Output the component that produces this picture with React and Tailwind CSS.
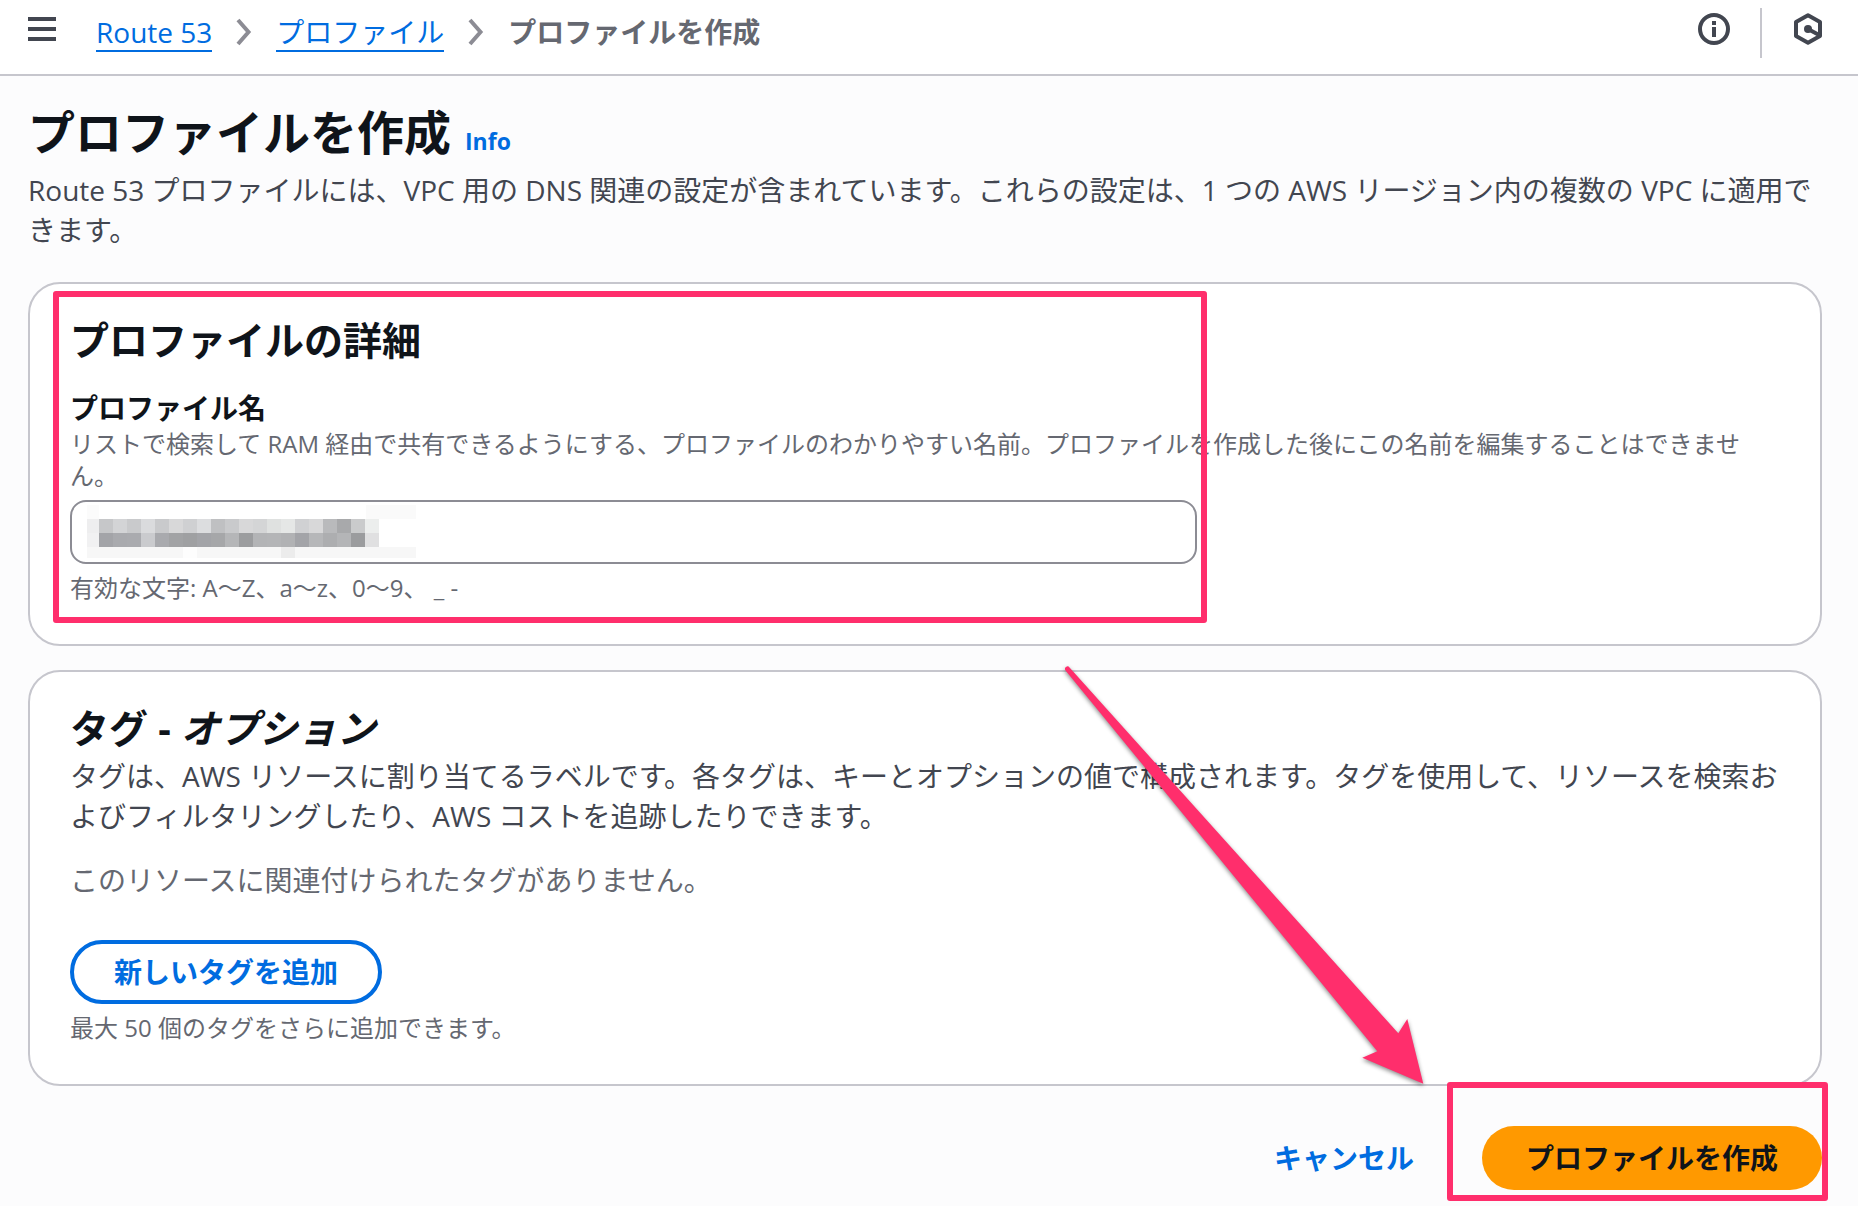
const ROW_TOP = ["#c6c7c9","#d3d4d6","#c9cacc","#dadbdd","#c9cacc","#d8d8d9","#cfd0d2","#dcdddf","#bfc0c2","#c9cacc","#d8d8d9","#d4d5d6","#dfe1e0","#e5e7e6","#d0d1d3","#d8d8d9","#b9babc","#a8a9ab","#cacbcc","#eceeed"];
const ROW_BOTTOM = ["#a3a4a8","#a9aaae","#aaabaf","#cacbce","#a9aaae","#a2a3a5","#9fa0a2","#a3a4a8","#a6a7a9","#b5b6b8","#9c9d9f","#b3b4b6","#b4b5b7","#b1b2b4","#a3a4a8","#b6b7b9","#adaeb0","#b4b5b7","#9b9c9e","#e0e0e1"];

function MenuIcon() {
  return (
    <svg width="28" height="24" viewBox="0 0 28 24" fill="#424650" aria-hidden="true">
      <rect width="28" height="4" />
      <rect y="10" width="28" height="4" />
      <rect y="20" width="28" height="4" />
    </svg>
  );
}

function Chevron() {
  return (
    <svg width="16" height="28" viewBox="0 0 16 28" fill="none" stroke="#8c8c94" strokeWidth="4" aria-hidden="true">
      <path d="M2 2 L12.500 14 L2 26" />
    </svg>
  );
}

function InfoIcon() {
  return (
    <svg width="32" height="32" viewBox="0 0 32 32" fill="none" aria-hidden="true">
      <circle cx="16" cy="16" r="14" stroke="#424650" strokeWidth="4" />
      <rect x="14" y="8" width="4" height="4" fill="#424650" />
      <rect x="14" y="14" width="4" height="10" fill="#424650" />
    </svg>
  );
}

function HexIcon() {
  return (
    <svg width="28" height="32" viewBox="0 0 28 32" fill="none" stroke="#424650" strokeWidth="4" aria-hidden="true">
      <path d="M14 2.300 L26 9 V23 L14 29.700 L2 23 V9 Z" strokeLinejoin="round" />
      <path d="M14 16 L26 22.500" />
      <circle cx="14" cy="16" r="4" fill="#424650" stroke="none" />
    </svg>
  );
}

function MaskedValue() {
  return (
    <div className="pointer-events-none absolute left-[17px] top-[5px] w-[329px]" aria-hidden="true">
      <div className="flex h-[14px] justify-between">
        <span className="w-3 bg-[#fbfbfb]" />
        <span className="w-[50px] bg-[#fafafa]" />
      </div>
      <div className="flex h-[14px]">
        <span className="w-3 bg-[#eeeeef]" />
        {ROW_TOP.map((c, i) => <span key={i} className="w-[14px]" style={{ backgroundColor: c }} />)}
      </div>
      <div className="flex h-[14px]">
        <span className="w-3 bg-[#f1f1f2]" />
        {ROW_BOTTOM.map((c, i) => <span key={i} className="w-[14px]" style={{ backgroundColor: c }} />)}
      </div>
      <div className="flex h-[11px] bg-[#f7f7f7]">
        <span className="ml-24 w-[14px] bg-[#fdfdfd]" />
        <span className="ml-[84px] w-[14px] bg-[#ececec]" />
      </div>
    </div>
  );
}

function Arrow() {
  return (
    <svg className="pointer-events-none absolute right-[390px] -top-[8px] drop-shadow-[0_2px_2px_rgba(0,0,0,0.45)]" width="370" height="430" viewBox="20 14 370 430" fill="#ff2e6c" aria-hidden="true">
      <path d="M29.500 17.500 L358.300 383.300 L367.300 369 L383.300 433.700 L322.300 407.700 L337.300 401.300 L25.500 20.500 A2.500 2.500 0 0 1 29.500 17.500 Z" />
    </svg>
  );
}

export default function App() {
  return (
    <div className="min-h-screen bg-[#fcfcfd] font-['Open_Sans','Noto_Sans_CJK_JP',sans-serif] text-[28px] leading-10 text-[#424650]">
      <header className="flex h-[76px] items-start justify-between border-b-2 border-[#c6c6cd] bg-white pl-7 pr-9">
        <div className="flex">
          <button type="button" aria-label="メニュー" className="mt-[17px] h-6"><MenuIcon /></button>
          <nav aria-label="パンくずリスト" className="ml-10 mt-3">
            <ol className="flex items-center gap-6">
              <li><a href="#route53" className="block h-10 border-b-2 border-[#006ce0] text-[#006ce0]">Route 53</a></li>
              <li><Chevron /></li>
              <li><a href="#profiles" className="block h-10 border-b-2 border-[#006ce0] text-[#006ce0]">プロファイル</a></li>
              <li><Chevron /></li>
              <li className="font-bold text-[#656871]" aria-current="page">プロファイルを作成</li>
            </ol>
          </nav>
        </div>
        <div className="flex">
          <button type="button" aria-label="情報" className="mt-[13px] h-8"><InfoIcon /></button>
          <span className="ml-[30px] mr-8 mt-2 h-[50px] w-[2px] bg-[#c6c6cd]" />
          <button type="button" aria-label="Amazon Q" className="mt-[13px] h-8"><HexIcon /></button>
        </div>
      </header>

      <main className="pl-7 pr-9">
        <div className="flex items-baseline gap-3.5 pt-6">
          <h1 className="text-[47px] font-bold leading-[64px] text-[#0f141a]">プロファイルを作成</h1>
          <a href="#info" className="text-[23px] font-bold text-[#006ce0]">Info</a>
        </div>
        <p className="mt-[6px]">
          Route 53 プロファイルには、VPC 用の DNS 関連の設定が含まれています。これらの設定は、1 つの AWS リージョン内の複数の VPC に適用できます。
        </p>

        <section className="relative mt-8 rounded-[32px] border-2 border-[#c6c6cd] bg-white px-10 pb-10 pt-8">
          <h2 className="text-[39px] font-bold leading-[48px] text-[#0f141a]">プロファイルの詳細</h2>
          <label htmlFor="name" className="mt-6 block font-bold text-[#0f141a]">プロファイル名</label>
          <p id="name-help" className="text-2xl leading-8 text-[#656871]">
            リストで検索して RAM 経由で共有できるようにする、プロファイルのわかりやすい名前。プロファイルを作成した後にこの名前を編集することはできません。
          </p>
          <div className="mt-2 grid grid-cols-[2fr_1fr] gap-5">
            <div className="relative h-16">
              <input id="name" type="text" aria-describedby="name-help" className="h-full w-full rounded-2xl border-2 border-[#8c8c94] bg-white px-6 outline-none" />
              <MaskedValue />
            </div>
          </div>
          <p className="mt-2 text-2xl leading-8 text-[#656871]">有効な文字: A〜Z、a〜z、0〜9、 _ -</p>
          <div className="pointer-events-none absolute left-[23px] top-[7px] h-[332px] w-[1154px] rounded-[3px] border-[6px] border-[#ff2e6c]" />
        </section>

        <section className="relative mt-6 rounded-[32px] border-2 border-[#c6c6cd] bg-white px-10 pb-10 pt-8">
          <h2 className="text-[39px] font-bold leading-[48px] text-[#0f141a]">タグ - <i>オプション</i></h2>
          <p className="mt-1">
            タグは、AWS リソースに割り当てるラベルです。各タグは、キーとオプションの値で構成されます。タグを使用して、リソースを検索およびフィルタリングしたり、AWS コストを追跡したりできます。
          </p>
          <p className="mt-6 text-[#656871]">このリソースに関連付けられたタグがありません。</p>
          <button type="button" className="mt-10 block h-16 rounded-full border-4 border-[#006ce0] bg-white px-10 font-bold text-[#006ce0]">新しいタグを追加</button>
          <p className="mt-2 text-2xl leading-8 text-[#656871]">最大 50 個のタグをさらに追加できます。</p>
          <Arrow />
        </section>

        <div className="relative mt-10 flex justify-end gap-6 pb-4">
          <button type="button" className="h-16 px-11 font-bold text-[#006ce0]">キャンセル</button>
          <button type="button" className="h-16 rounded-full bg-[#ff9900] px-11 font-bold text-[#0f141a]">プロファイルを作成</button>
          <div className="pointer-events-none absolute -right-[6px] -top-11 h-[119px] w-[381px] rounded-[3px] border-[6px] border-[#ff2e6c]" />
        </div>
      </main>
    </div>
  );
}
